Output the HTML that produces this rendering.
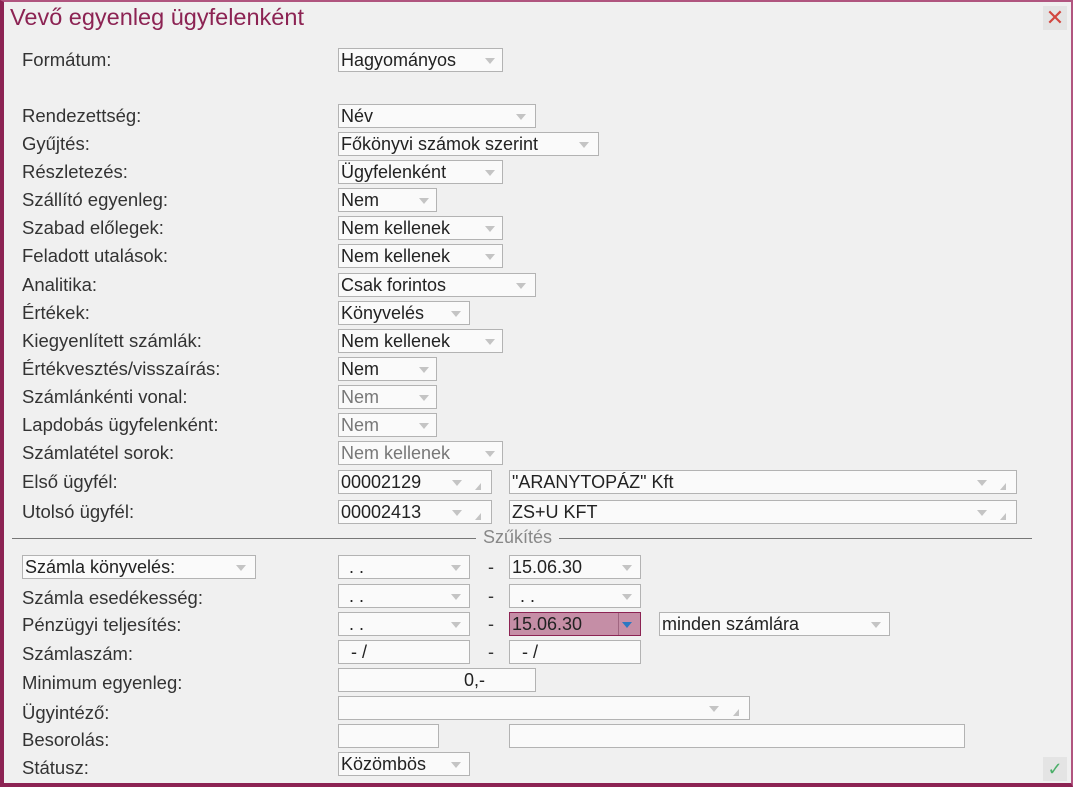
<!DOCTYPE html><html><head><meta charset="utf-8"><style>
*{margin:0;padding:0;box-sizing:border-box}
body{width:1073px;height:787px;overflow:hidden;background:#f0f0f0;font-family:"Liberation Sans",sans-serif;position:relative;color:#333}
.fr{position:absolute;left:0;top:0;width:1073px;height:787px;border-left:4px solid #8c2353;border-bottom:4px solid #8c2353;border-top:2px solid #b0557f;border-right:2px solid #b0557f}
.t{position:absolute;left:10px;top:4px;font-size:23.5px;color:#8c2353}
.l{position:absolute;left:22px;font-size:18.5px;line-height:20px;color:#333}
.b{position:absolute;height:24px;border:1px solid #b3b3b3;background:#fafafa;font-size:18px;line-height:22px;padding-left:2px;color:#222;white-space:nowrap;overflow:hidden}
.d{color:#777}
.a{position:absolute;top:9px;width:0;height:0;border-left:5px solid transparent;border-right:5px solid transparent;border-top:6px solid #c4c4c4}
.c{position:absolute;bottom:3px;width:0;height:0;border-left:6px solid transparent;border-bottom:7px solid #c4c4c4}
.dash{position:absolute;font-size:18px;color:#333}
</style></head><body>
<div class="fr"></div>
<div class="t">Vevő egyenleg ügyfelenként</div>
<div style="position:absolute;left:1043px;top:6px;width:24px;height:24px;background:#e4e4e4;color:#d2463f;font-size:22px;line-height:24px;text-align:center">✕</div>

<div class="l" style="top:50px">Formátum:</div>
<div class="b" style="left:338px;top:48px;width:165px">Hagyományos<i class="a" style="left:146px"></i></div>

<div class="l" style="top:106px">Rendezettség:</div>
<div class="b" style="left:338px;top:104px;width:198px">Név<i class="a" style="left:177px"></i></div>
<div class="l" style="top:134px">Gyűjtés:</div>
<div class="b" style="left:338px;top:132px;width:261px">Főkönyvi számok szerint<i class="a" style="left:240px"></i></div>
<div class="l" style="top:162px">Részletezés:</div>
<div class="b" style="left:338px;top:160px;width:165px">Ügyfelenként<i class="a" style="left:146px"></i></div>
<div class="l" style="top:190px">Szállító egyenleg:</div>
<div class="b" style="left:338px;top:188px;width:99px">Nem<i class="a" style="left:80px"></i></div>
<div class="l" style="top:218px">Szabad előlegek:</div>
<div class="b" style="left:338px;top:216px;width:165px">Nem kellenek<i class="a" style="left:146px"></i></div>
<div class="l" style="top:246px">Feladott utalások:</div>
<div class="b" style="left:338px;top:244px;width:165px">Nem kellenek<i class="a" style="left:146px"></i></div>
<div class="l" style="top:275px">Analitika:</div>
<div class="b" style="left:338px;top:273px;width:198px">Csak forintos<i class="a" style="left:177px"></i></div>
<div class="l" style="top:303px">Értékek:</div>
<div class="b" style="left:338px;top:301px;width:132px">Könyvelés<i class="a" style="left:112px"></i></div>
<div class="l" style="top:331px">Kiegyenlített számlák:</div>
<div class="b" style="left:338px;top:329px;width:165px">Nem kellenek<i class="a" style="left:146px"></i></div>
<div class="l" style="top:359px">Értékvesztés/visszaírás:</div>
<div class="b" style="left:338px;top:357px;width:99px">Nem<i class="a" style="left:80px"></i></div>
<div class="l" style="top:387px">Számlánkénti vonal:</div>
<div class="b d" style="left:338px;top:385px;width:99px">Nem<i class="a" style="left:80px"></i></div>
<div class="l" style="top:415px">Lapdobás ügyfelenként:</div>
<div class="b d" style="left:338px;top:413px;width:99px">Nem<i class="a" style="left:80px"></i></div>
<div class="l" style="top:443px">Számlatétel sorok:</div>
<div class="b d" style="left:338px;top:441px;width:165px">Nem kellenek<i class="a" style="left:146px"></i></div>
<div class="l" style="top:472px">Első ügyfél:</div>
<div class="b" style="left:338px;top:470px;width:154px">00002129<i class="a" style="left:113px"></i><i class="c" style="left:136px"></i></div>
<div class="b" style="left:509px;top:470px;width:508px">"ARANYTOPÁZ" Kft<i class="a" style="left:467px"></i><i class="c" style="left:490px"></i></div>
<div class="l" style="top:502px">Utolsó ügyfél:</div>
<div class="b" style="left:338px;top:500px;width:154px">00002413<i class="a" style="left:113px"></i><i class="c" style="left:136px"></i></div>
<div class="b" style="left:509px;top:500px;width:508px">ZS+U KFT<i class="a" style="left:467px"></i><i class="c" style="left:490px"></i></div>

<div style="position:absolute;left:12px;top:538px;width:1020px;height:1px;background:#777"></div>
<div style="position:absolute;left:476px;top:527px;padding:0 7px;background:#f0f0f0;color:#888;font-size:18px;line-height:20px">Szűkítés</div>

<div class="b" style="left:22px;top:555px;width:234px">Számla könyvelés:<i class="a" style="left:213px"></i></div>
<div class="b" style="left:338px;top:555px;width:132px;padding-left:10px">. .<i class="a" style="left:112px"></i></div>
<div class="dash" style="left:488px;top:557px">-</div>
<div class="b" style="left:509px;top:555px;width:132px">15.06.30<i class="a" style="left:112px"></i></div>

<div class="l" style="top:588px">Számla esedékesség:</div>
<div class="b" style="left:338px;top:584px;width:132px;padding-left:10px">. .<i class="a" style="left:112px"></i></div>
<div class="dash" style="left:488px;top:586px">-</div>
<div class="b" style="left:509px;top:584px;width:132px;padding-left:10px">. .<i class="a" style="left:112px"></i></div>

<div class="l" style="top:615px">Pénzügyi teljesítés:</div>
<div class="b" style="left:338px;top:612px;width:132px;padding-left:10px">. .<i class="a" style="left:112px"></i></div>
<div class="dash" style="left:488px;top:614px">-</div>
<div class="b" style="left:509px;top:612px;width:132px;background:#c58ea6;border-color:#8c2353">15.06.30<i class="a" style="left:112px;border-top-color:#2b78c2"></i><span style="position:absolute;left:108px;top:0;width:1px;height:22px;background:#a06580"></span></div>
<div class="b" style="left:659px;top:612px;width:231px">minden számlára<i class="a" style="left:211px"></i></div>

<div class="l" style="top:644px">Számlaszám:</div>
<div class="b" style="left:338px;top:640px;width:132px;padding-left:12px">- /</div>
<div class="dash" style="left:488px;top:642px">-</div>
<div class="b" style="left:509px;top:640px;width:132px;padding-left:12px">- /</div>

<div class="l" style="top:673px">Minimum egyenleg:</div>
<div class="b" style="left:338px;top:668px;width:198px;text-align:right;padding-right:50px">0,-</div>

<div class="l" style="top:703px">Ügyintéző:</div>
<div class="b" style="left:338px;top:696px;width:412px"><i class="a" style="left:370px"></i><i class="c" style="left:394px"></i></div>

<div class="l" style="top:730px">Besorolás:</div>
<div class="b" style="left:338px;top:724px;width:101px"></div>
<div class="b" style="left:509px;top:724px;width:456px"></div>

<div class="l" style="top:758px">Státusz:</div>
<div class="b" style="left:338px;top:752px;width:132px">Közömbös<i class="a" style="left:112px"></i></div>

<div style="position:absolute;left:1043px;top:757px;width:24px;height:24px;background:#e4e4e4;color:#4caf6a;font-size:18px;line-height:24px;text-align:center">✓</div>
</body></html>
